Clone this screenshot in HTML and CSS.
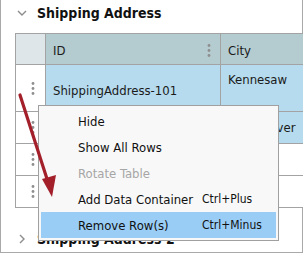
FILE: index.html
```html
<!DOCTYPE html>
<html lang="en">
<head>
    <meta charset="UTF-8">
    <meta name="viewport" content="width=device-width, initial-scale=1.0">
    <title>Shipping Address</title>
    <link rel="stylesheet" href="styles.css">
</head>
<body>
    <div class="panel">
        <div class="section-head">
            <svg class="chevron" width="10" height="10" viewBox="0 0 10 10">
                <polyline points="1,3 5,7 9,3" fill="none" stroke="#8c8c8c" stroke-width="1.4"/>
            </svg>
            <span>Shipping Address</span>
        </div>

        <div class="data-grid">
            <div class="cell handle head"></div>
            <div class="cell col-head">ID
                <svg class="dots" width="4" height="13" viewBox="0 0 4 13">
                    <circle cx="2" cy="1.5" r="1.4"/><circle cx="2" cy="6.5" r="1.4"/><circle cx="2" cy="11.5" r="1.4"/>
                </svg>
            </div>
            <div class="cell col-head">City</div>

            <div class="cell handle">
                <svg class="dots" width="4" height="13" viewBox="0 0 4 13">
                    <circle cx="2" cy="1.5" r="1.4"/><circle cx="2" cy="6.5" r="1.4"/><circle cx="2" cy="11.5" r="1.4"/>
                </svg>
            </div>
            <div class="cell selected middle tall">ShippingAddress-101</div>
            <div class="cell selected top">Kennesaw</div>

            <div class="cell handle">
                <svg class="dots" width="4" height="13" viewBox="0 0 4 13">
                    <circle cx="2" cy="1.5" r="1.4"/><circle cx="2" cy="6.5" r="1.4"/><circle cx="2" cy="11.5" r="1.4"/>
                </svg>
            </div>
            <div class="cell selected middle"></div>
            <div class="cell selected middle city-long">Vancouver</div>

            <div class="cell handle">
                <svg class="dots" width="4" height="13" viewBox="0 0 4 13">
                    <circle cx="2" cy="1.5" r="1.4"/><circle cx="2" cy="6.5" r="1.4"/><circle cx="2" cy="11.5" r="1.4"/>
                </svg>
            </div>
            <div class="cell middle"></div>
            <div class="cell middle"></div>

            <div class="cell handle">
                <svg class="dots" width="4" height="13" viewBox="0 0 4 13">
                    <circle cx="2" cy="1.5" r="1.4"/><circle cx="2" cy="6.5" r="1.4"/><circle cx="2" cy="11.5" r="1.4"/>
                </svg>
            </div>
            <div class="cell middle"></div>
            <div class="cell middle"></div>
        </div>

        <div class="section-head second">
            <svg class="chevron" width="10" height="10" viewBox="0 0 10 10">
                <polyline points="3,1 7,5 3,9" fill="none" stroke="#8c8c8c" stroke-width="1.4"/>
            </svg>
            <span>Shipping Address 2</span>
        </div>

        <!-- context menu opened on the row handle -->
        <ul class="context-menu">
            <li><span>Hide</span></li>
            <li><span>Show All Rows</span></li>
            <li class="disabled"><span>Rotate Table</span></li>
            <li><span>Add Data Container</span><span class="shortcut">Ctrl+Plus</span></li>
            <li class="active"><span>Remove Row(s)</span><span class="shortcut">Ctrl+Minus</span></li>
        </ul>

        <svg class="annotation" width="70" height="210" viewBox="0 0 70 210">
            <line x1="19" y1="95" x2="47" y2="182" stroke="#a3202b" stroke-width="3.2" stroke-linecap="round"/>
            <polygon points="41,179 55,175 51,197" fill="#a3202b"/>
        </svg>
    </div>
</body>
</html>
```

FILE: styles.css
```css
body {
    margin: 0;
    overflow: hidden;
    font-family: "DejaVu Sans Condensed", "DejaVu Sans", sans-serif;
    font-stretch: condensed;
    color: #1a1a1a;
    background: #fff;
}
.panel {
    position: relative;
    width: 301px;
    height: 252px;
    border: 1px solid #a9a9a9;
    border-top: none;
}
.section-head {
    display: flex;
    align-items: center;
    height: 26px;
    padding-left: 16px;
    gap: 10px;
    font-size: 14px;
    font-weight: bold;
    color: #111;
}
.section-head.second {
    margin-top: 18px;
}
.chevron {
    flex: none;
}
.data-grid {
    display: grid;
    grid-template-columns: 29px 174px 1fr;
    grid-template-rows: 30px 46px 31px 31px 31px;
    gap: 1px;
    width: 287px;
    margin: 7px 0 0 14px;
    background: #a3a3a3;
    border: 1px solid #a3a3a3;
    border-right: none;
    font-size: 13px;
}
.cell {
    display: flex;
    align-items: center;
    padding-left: 7px;
    background: #fff;
    white-space: nowrap;
    overflow: hidden;
}
.cell.top {
    align-items: flex-start;
    padding-top: 7px;
}
.cell.tall {
    padding-top: 4px;
}
.cell.city-long {
    padding-left: 13px;
}
.handle {
    padding-left: 15px;
}
.handle.head {
    background: #dfe6e9;
}
.col-head {
    background: #b4cbd0;
    justify-content: space-between;
    padding-right: 9px;
    padding-top: 2px;
}
.selected {
    background: #b6dbee;
}
.dots {
    fill: #8e8e8e;
    flex: none;
}
.context-menu {
    position: absolute;
    left: 37px;
    top: 105px;
    width: 235px;
    margin: 0;
    padding: 2px;
    list-style: none;
    background: #f8f8f8;
    border: 1px solid #a0a0a0;
    font-size: 13px;
    color: #111;
}
.context-menu li {
    display: grid;
    grid-template-columns: 124px auto;
    align-items: center;
    height: 26px;
    padding-left: 37px;
}
.context-menu li.disabled {
    color: #a6a6a6;
}
.context-menu li.active {
    background: #99cdf6;
}
.shortcut {
    font-size: 12px;
}
.annotation {
    position: absolute;
    left: 0;
    top: 0;
}
```
